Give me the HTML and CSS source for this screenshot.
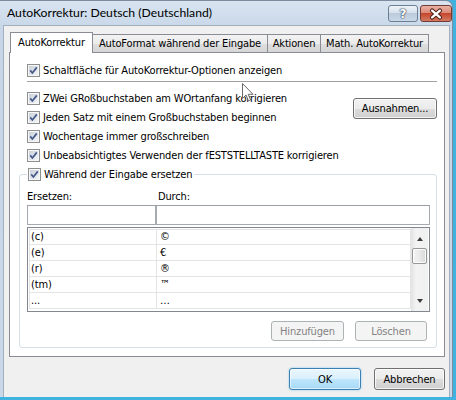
FILE: index.html
```html
<!DOCTYPE html>
<html lang="de">
<head>
<meta charset="utf-8">
<link rel="stylesheet" href="styles.css">
</head>
<body>
<div class="window">
  <div class="titlebar">
    <span class="title">AutoKorrektur: Deutsch (Deutschland)</span>
    <div class="caption-btns">
      <span class="cap help">?</span>
      <span class="cap close">
        <svg width="31" height="16" viewBox="0 0 31 16">
          <path d="M11.5 4.5 L19.5 11.5 M19.5 4.5 L11.5 11.5" stroke="#4a1e17" stroke-width="4.4" stroke-linecap="round" fill="none"/>
          <path d="M11.5 4.5 L19.5 11.5 M19.5 4.5 L11.5 11.5" stroke="#ffffff" stroke-width="2.4" stroke-linecap="round" fill="none"/>
        </svg>
      </span>
    </div>
  </div>
  <div class="client">
    <div class="tabs">
      <div class="tab active t1">AutoKorrektur</div>
      <div class="tab t2">AutoFormat während der Eingabe</div>
      <div class="tab t3">Aktionen</div>
      <div class="tab t4">Math. AutoKorrektur</div>
    </div>
    <div class="panel">
      <div class="check first"><span class="cb"><svg width="11" height="11" viewBox="0 0 11 11"><path d="M2.2 5.4 L4.4 8 L8.8 2.4" stroke="#44598a" stroke-width="1.7" fill="none"/></svg></span><span>Schaltfläche für AutoKorrektur-Optionen anzeigen</span></div>
      <div class="sep"></div>
      <div class="opts">
        <div class="opt-list">
          <div class="check"><span class="cb"><svg width="11" height="11" viewBox="0 0 11 11"><path d="M2.2 5.4 L4.4 8 L8.8 2.4" stroke="#44598a" stroke-width="1.7" fill="none"/></svg></span><span>ZWei GRoßbuchstaben am WOrtanfang korrigieren</span></div>
          <div class="check"><span class="cb"><svg width="11" height="11" viewBox="0 0 11 11"><path d="M2.2 5.4 L4.4 8 L8.8 2.4" stroke="#44598a" stroke-width="1.7" fill="none"/></svg></span><span>Jeden Satz mit einem Großbuchstaben beginnen</span></div>
          <div class="check"><span class="cb"><svg width="11" height="11" viewBox="0 0 11 11"><path d="M2.2 5.4 L4.4 8 L8.8 2.4" stroke="#44598a" stroke-width="1.7" fill="none"/></svg></span><span>Wochentage immer großschreiben</span></div>
          <div class="check"><span class="cb"><svg width="11" height="11" viewBox="0 0 11 11"><path d="M2.2 5.4 L4.4 8 L8.8 2.4" stroke="#44598a" stroke-width="1.7" fill="none"/></svg></span><span>Unbeabsichtigtes Verwenden der fESTSTELLTASTE korrigieren</span></div>
        </div>
        <button class="btn ausnahmen">Ausnahmen...</button>
      </div>
      <fieldset class="group">
        <legend><div class="check"><span class="cb"><svg width="11" height="11" viewBox="0 0 11 11"><path d="M2.2 5.4 L4.4 8 L8.8 2.4" stroke="#44598a" stroke-width="1.7" fill="none"/></svg></span><span>Während der Eingabe ersetzen</span></div></legend>
        <div class="labels"><span class="l1">Ersetzen:</span><span class="l2">Durch:</span></div>
        <div class="inputs"><div class="input i1"></div><div class="input i2"></div></div>
        <div class="list">
          <div class="rows">
            <div class="row"><span class="c1">(c)</span><span class="c2">©</span></div>
            <div class="row"><span class="c1">(e)</span><span class="c2">€</span></div>
            <div class="row"><span class="c1">(r)</span><span class="c2">®</span></div>
            <div class="row"><span class="c1">(tm)</span><span class="c2">™</span></div>
            <div class="row"><span class="c1">...</span><span class="c2">…</span></div>
          </div>
          <div class="scrollbar">
            <div class="arrow"><span class="tri up"></span></div>
            <div class="thumb"></div>
            <div class="track"></div>
            <div class="arrow"><span class="tri down"></span></div>
          </div>
        </div>
        <div class="group-btns">
          <button class="btn disabled w-hinz" disabled>Hinzufügen</button>
          <button class="btn disabled w-losch" disabled>Löschen</button>
        </div>
      </fieldset>
    </div>
    <div class="footer">
      <button class="btn default w-ok">OK</button>
      <button class="btn w-abb">Abbrechen</button>
    </div>
  </div>
  <svg class="cursor" width="13" height="20" viewBox="0 0 13 20">
    <path d="M0.5 0.5 L0.5 15.5 L4 12 L6.5 17.8 L8.6 16.9 L6.2 11.3 L11 11.3 Z" fill="#ffffff" stroke="#6a6a6a" stroke-width="1"/>
  </svg>
</div>
</body>
</html>
```
FILE: styles.css
```css
html, body {
  margin: 0;
  padding: 0;
}
body {
  width: 456px;
  height: 400px;
  overflow: hidden;
  background: #3fb2e0;
  font-family: "DejaVu Sans Condensed", "DejaVu Sans", sans-serif;
  font-size: 11px;
  letter-spacing: -0.15px;
  color: #000;
}
.window {
  position: relative;
  width: 453px;
  height: 397px;
  box-sizing: border-box;
  background: linear-gradient(#d9e4f0, #c6d6e8 30px, #c9d9ea);
  border-top: 1px solid #7c8c9e;
  border-right: 1px solid #7c8c9e;
  border-radius: 0 7px 0 0;
  display: flex;
  flex-direction: column;
}
.titlebar {
  height: 24px;
  display: flex;
  align-items: flex-start;
  justify-content: space-between;
}
.title {
  font-family: Lato, "Noto Sans", sans-serif;
  font-size: 12.2px;
  letter-spacing: 0;
  line-height: 24px;
  padding-left: 7px;
  color: #000;
}
.caption-btns {
  display: flex;
  gap: 2px;
  margin-top: 4px;
  margin-right: 0;
}
.cap {
  height: 17px;
  box-sizing: border-box;
  border-radius: 3px;
  display: flex;
  align-items: center;
  justify-content: center;
}
.help {
  width: 30px;
  border: 1px solid #6e7f93;
  background: linear-gradient(#eef3f8, #d6e1ec 45%, #bccbdc 50%, #c9d8e8);
  color: #fff;
  font-family: "DejaVu Sans", sans-serif;
  font-weight: bold;
  font-size: 12px;
  letter-spacing: 0;
  text-shadow: 0 0 1px #33465e, 0 0 1px #33465e, 0 0 2px #33465e;
}
.close {
  width: 32px;
  border: 1px solid #6f3b33;
  background: linear-gradient(#eab1a4, #da8a78 45%, #c5472f 50%, #d47a62);
}
.close svg { display: block; }
.client {
  flex: 1;
  margin-left: 3px;
  margin-right: 2px;
  background: #f0f0f0;
  border-top: 1px solid #a3afbc;
  border-left: 1px solid #a3afbc;
  border-right: 1px solid #a3afbc;
  padding: 6px 0 0 5px;
}
.tabs {
  position: relative;
  z-index: 1;
  display: flex;
  align-items: flex-end;
  height: 21px;
  margin-bottom: -1px;
  padding-left: 1px;
}
.tab {
  box-sizing: border-box;
  height: 18px;
  margin-bottom: 1px;
  border: 1px solid #898c95;
  border-bottom: none;
  background: linear-gradient(#f3f3f3, #ebebeb 50%, #dedede 50%, #d6d6d6);
  text-align: center;
  line-height: 17px;
  white-space: nowrap;
  margin-left: -1px;
}
.tab.active {
  height: 21px;
  margin-bottom: 0;
  background: #fff;
  line-height: 20px;
  position: relative;
  z-index: 2;
  margin-left: 0;
}
.t1 { width: 83px; }
.t2 { width: 176px; }
.t3 { width: 54px; }
.t4 { width: 109px; }
.panel {
  width: 436px;
  height: 305px;
  box-sizing: border-box;
  border: 1px solid #898c95;
  background: #fff;
}
.check {
  display: flex;
  align-items: center;
  height: 19px;
  gap: 3px;
  white-space: nowrap;
}
.cb {
  width: 13px;
  height: 13px;
  box-sizing: border-box;
  border: 1px solid #8e8f8f;
  background: linear-gradient(135deg, #c6ccd6, #eef0f3 80%);
  box-shadow: inset 0 0 0 1px #f7f7f7;
  display: flex;
  align-items: center;
  justify-content: center;
  flex: none;
}
.cb svg { display: block; }
.first {
  margin: 8px 0 0 17px;
}
.sep {
  height: 1px;
  background: #a0a0a0;
  margin: 1px 7px 0 17px;
}
.opts {
  display: flex;
  margin: 7px 7px 0 17px;
}
.opt-list { flex: 1; }
.btn {
  font-family: inherit;
  font-size: 11px;
  letter-spacing: -0.15px;
  color: #000;
  box-sizing: border-box;
  border: 1px solid #707070;
  border-radius: 3px;
  background: linear-gradient(#f2f2f2, #ebebeb 50%, #dddddd 50%, #cfcfcf);
  box-shadow: inset 0 0 0 1px rgba(255,255,255,0.75);
  padding: 0;
  margin: 0;
}
.ausnahmen {
  width: 84px;
  height: 21px;
  margin-top: 9px;
}
.group {
  box-sizing: border-box;
  height: 183px;
  margin: 0 7px 0 9px;
  padding: 0 6px 0 7px;
  border: 1px solid #d5dfe5;
  border-radius: 3px;
  min-width: 0;
}
.group legend {
  padding: 0 2px 0 1px;
}
.labels {
  display: flex;
  margin-top: 6px;
  height: 14px;
  line-height: 14px;
}
.l1 { width: 131px; }
.inputs {
  display: flex;
  margin-top: 1px;
}
.input {
  height: 20px;
  box-sizing: border-box;
  border: 1px solid #a5a9b0;
  border-top-color: #9ba0a8;
  background: #fff;
}
.i1 { width: 129px; }
.i2 { flex: 1; }
.list {
  display: flex;
  margin-top: 2px;
  height: 85px;
  box-sizing: border-box;
  border: 1px solid #828790;
  background: #fff;
}
.rows {
  flex: 1;
  padding: 1px 0 0 1px;
}
.row {
  display: grid;
  grid-template-columns: 128px 1fr;
  height: 16px;
}
.row span {
  box-sizing: border-box;
  border-bottom: 1px solid #e4e4e4;
  border-right: 1px solid #e4e4e4;
  line-height: 16px;
  height: 16px;
  white-space: nowrap;
}
.row:first-child span { border-top: 1px solid #e4e4e4; line-height: 14px; }
.c1 { border-left: 1px solid #e4e4e4; padding-left: 1px; }
.c2 { padding-left: 3px; }
.scrollbar {
  width: 17px;
  margin-right: 1px;
  padding: 2px 0;
  box-sizing: border-box;
  display: flex;
  flex-direction: column;
  background: linear-gradient(to right, #e3e3e3, #f3f3f3 30%, #f0f0f0);
}
.arrow {
  height: 17px;
  display: flex;
  align-items: center;
  justify-content: center;
}
.tri {
  width: 0;
  height: 0;
  border-left: 3.5px solid transparent;
  border-right: 3.5px solid transparent;
}
.tri.up { border-bottom: 4px solid #3c3c3c; }
.tri.down { border-top: 4px solid #3c3c3c; }
.thumb {
  height: 16px;
  margin: 1px 1px 0 1px;
  box-sizing: border-box;
  border: 1px solid #979797;
  border-radius: 2px;
  background: linear-gradient(to right, #f4f4f4, #e9e9e9 50%, #d9d9d9);
  box-shadow: inset 0 0 0 1px rgba(255,255,255,0.8);
}
.track { flex: 1; }
.group-btns {
  display: flex;
  justify-content: flex-end;
  gap: 11px;
  margin-top: 9px;
  padding-right: 3px;
}
.btn.disabled {
  height: 20px;
  border-color: #adb2b5;
  background: #f4f4f4;
  box-shadow: none;
  color: #838383;
}
.w-hinz { width: 73px; }
.w-losch { width: 72px; }
.footer {
  width: 436px;
  display: flex;
  justify-content: flex-end;
  gap: 13px;
  margin-top: 11px;
}
.w-ok, .w-abb { height: 22px; }
.w-ok { width: 72px; }
.w-abb { width: 71px; }
.btn.default {
  border-color: #3c7fb1;
  background: linear-gradient(#eaf6fd, #d9f0fc 50%, #bee6fd 50%, #a7d9f5);
  box-shadow: inset 0 0 0 1px rgba(255,255,255,0.6), 0 0 2px #6fc6f3;
}
.cursor {
  position: absolute;
  left: 242px;
  top: 82px;
}
```
